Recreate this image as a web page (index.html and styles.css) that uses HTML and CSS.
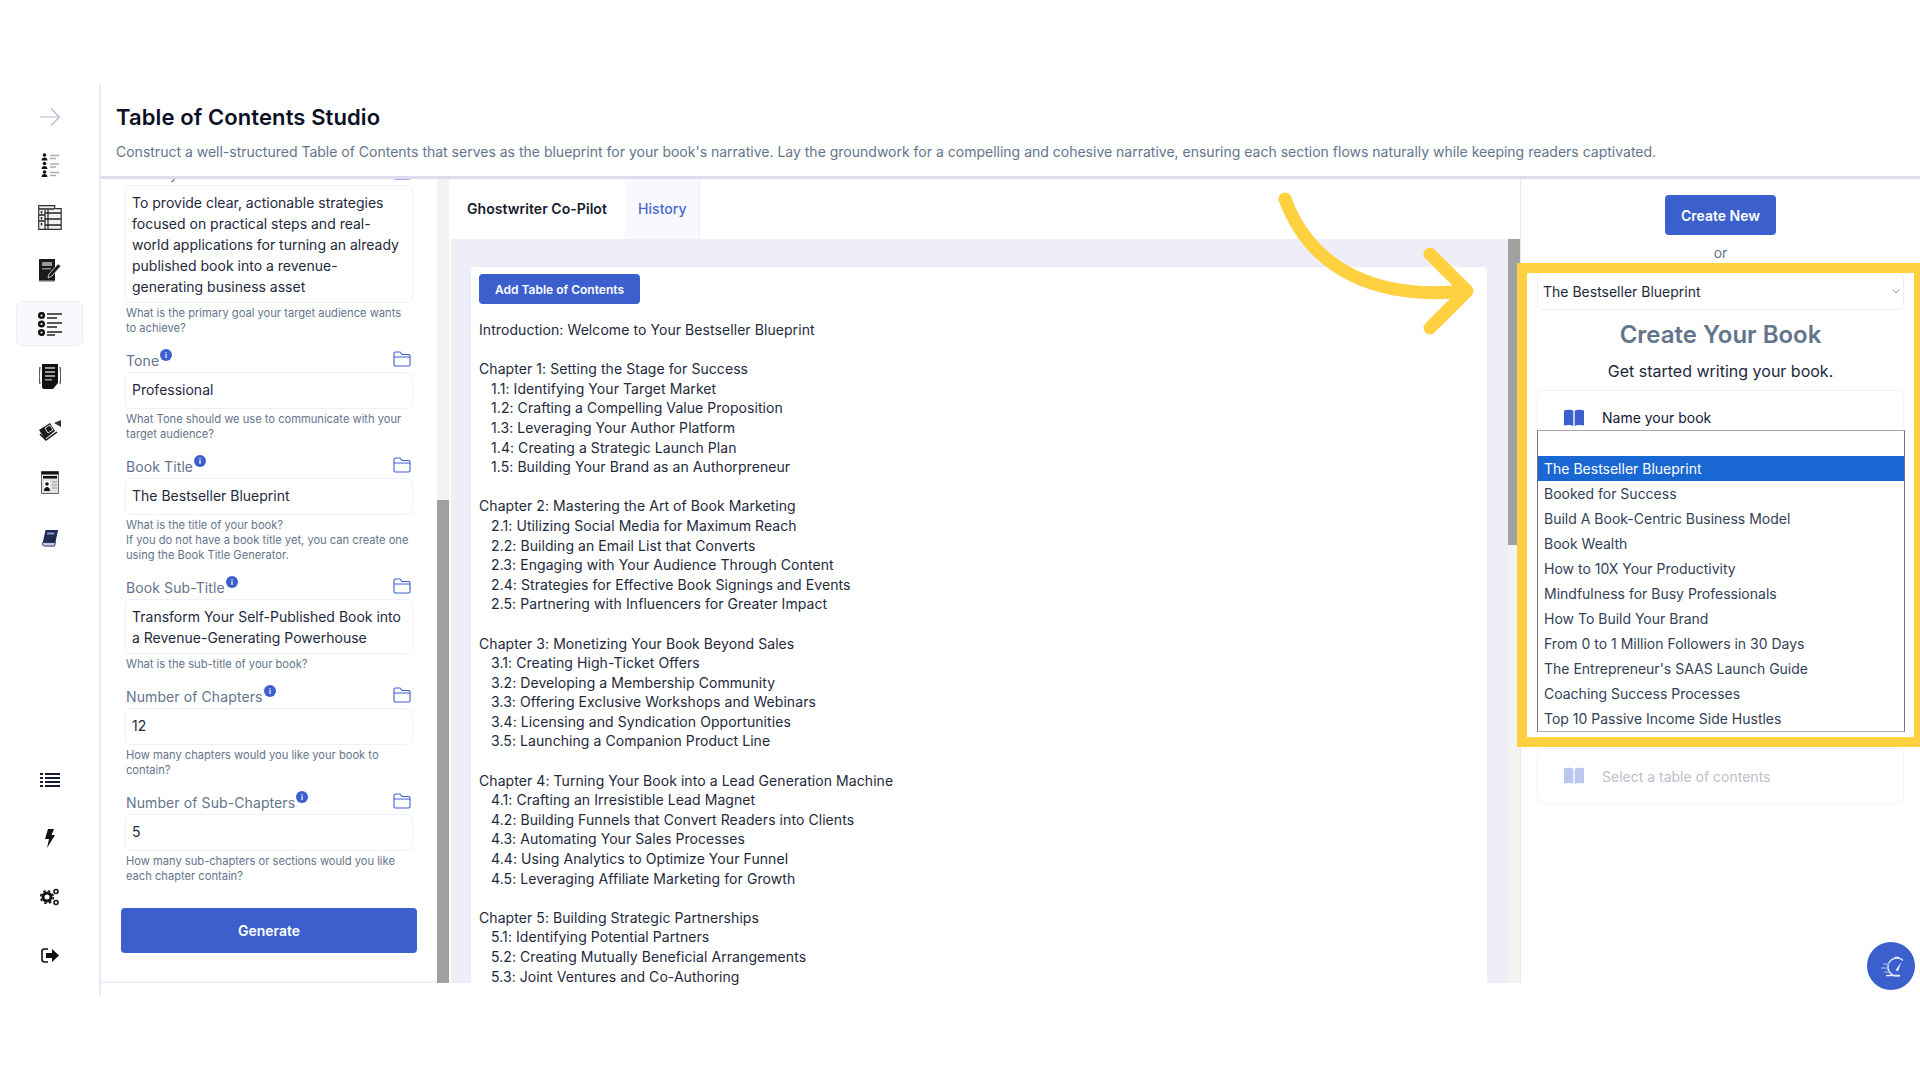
FILE: index.html
```html
<!DOCTYPE html>
<html lang="en">
<head>
    <meta charset="UTF-8">
    <title>Table of Contents Studio</title>
    <link rel="stylesheet" href="styles.css">
</head>
<body>
    <svg width="0" height="0" class="defs">
        <symbol id="folder" viewBox="0 0 18 16"><path d="M1 13.500V2.500C1 1.600 1.600 1 2.500 1H7l2 2.500h6.500c.9 0 1.500 .6 1.500 1.500v8.500c0 .9-.6 1.500-1.500 1.500h-13C1.600 15 1 14.400 1 13.500ZM1 6h16" fill="none" stroke="#3b5fcc" stroke-width="1.100"/></symbol>
        <symbol id="info" viewBox="0 0 12 12"><circle cx="6" cy="6" r="6" fill="#3b5fcc"/><rect x="5.400" y="5" width="1.200" height="4" fill="#fff"/><rect x="5.400" y="3" width="1.200" height="1.200" fill="#fff"/></symbol>
        <symbol id="open-book" viewBox="0 0 20 18"><path d="M0 1.500C3 .5 7 .5 9.300 1.800V17C7 15.700 3 15.700 0 16.500ZM20 1.500C17 .5 13 .5 10.700 1.800V17C13 15.700 17 15.700 20 16.500Z" fill="#3b5fcc"/></symbol>
    </svg>

    <div class="app">
        <nav class="sidebar">
            <div class="nav-group">
                <a class="nav-item nav-toggle"><svg width="20" height="20" viewBox="0 0 20 20"><path d="M0 10h19.500M11 1.500l8.500 8.500-8.500 8.500" fill="none" stroke="#b4b4cf" stroke-width="1.200"/></svg></a>
                <a class="nav-item"><svg width="18" height="24" viewBox="0 0 18 24"><g fill="#111"><circle cx="3.500" cy="2" r="1.800"/><path d="M.5 7.500c0-2 1.300-3 3-3s3 1 3 3Z"/><circle cx="3.500" cy="10.500" r="1.800"/><path d="M.5 16c0-2 1.300-3 3-3s3 1 3 3Z"/><circle cx="3.500" cy="19" r="1.800"/><path d="M.5 24c0-2 1.300-3 3-3s3 1 3 3Z"/></g><path d="M9 2.500h9M9 5.500h6M9 11h9M9 14h6M9 19.500h9M9 22.500h6" stroke="#aaa" stroke-width="1.400"/></svg></a>
                <a class="nav-item"><svg width="24" height="25" viewBox="0 0 24 25"><path d="M.7 .7h16v3h6.500v20.600H.7Z" fill="#f1f1f1" stroke="#333" stroke-width="1.200"/><path d="M1 4h15M7 8h16M7 14h16M7 20h16M1 10h6M1 16h6" stroke="#222" stroke-width="1.300"/><path d="M7 5v19M10 5v19" stroke="#222" stroke-width="1.200"/><path d="M3.500 6v2.500M3.500 12v2.500M3.500 18v2.500" stroke="#222" stroke-width="1.500"/></svg></a>
                <a class="nav-item"><svg width="24" height="23" viewBox="0 0 24 23"><path d="M1 0h16v21H1Z" fill="#1a1a1a"/><path d="M1 21h16v1.500H1Z" fill="#666"/><path d="M4 3h10v4H4Z" fill="#999"/><path d="M4 9h9v1.500H4Z" fill="#888"/><path d="M11 15l9-10 3 2-9 10-4 2Z" fill="#1a1a1a" stroke="#eee" stroke-width=".800"/></svg></a>
                <a class="nav-item active"><svg width="24" height="24" viewBox="0 0 24 24"><g fill="none" stroke="#111" stroke-width="2.500"><circle cx="3.500" cy="3.500" r="2.300"/><circle cx="3.500" cy="12" r="2.300"/><circle cx="3.500" cy="20.500" r="2.300"/></g><path d="M9 2h15M9 6h10M9 11h15M9 15h10M9 20h15M9 23h8" stroke="#222" stroke-width="1.500"/></svg></a>
                <a class="nav-item"><svg width="22" height="25" viewBox="0 0 22 25"><path d="M1 3C0 9 0 15 1 20M21 3c1 6 1 12 0 17" fill="none" stroke="#555" stroke-width="1.300"/><path d="M3 0h16v19l-5 6H5c-1 0-2-1-2-2Z" fill="#111"/><path d="M6 3h10v2H6ZM6 7h10v2H6ZM6 11h10v2H6ZM6 15h7v1.500H6Z" fill="#999"/></svg></a>
                <a class="nav-item"><svg width="22" height="22" viewBox="0 0 22 22"><path d="M0 11l11-7 5 8-10 8Z" fill="#1a1a1a"/><path d="M6 9l5-3 3 5-5 3Z" fill="none" stroke="#ddd" stroke-width="1"/><path d="M15 4l7-3v7Z" fill="#333"/><path d="M1 15l6 6 11-8" fill="none" stroke="#111" stroke-width="1.500"/></svg></a>
                <a class="nav-item"><svg width="18" height="23" viewBox="0 0 18 23"><path d="M.5 .5h17v22H.5Z" fill="#e2e2e2" stroke="#666" stroke-width="1"/><path d="M.5 .5h17v3H.5ZM2 5h14v2.500H2Z" fill="#111"/><path d="M3 10h6v10H3Z" fill="#fff"/><circle cx="6" cy="13" r="1.800" fill="#111"/><path d="M3 20c0-3 1.500-4 3-4s3 1 3 4Z" fill="#111"/><path d="M11 11h5M11 14h5M11 17h5" stroke="#999"/></svg></a>
                <a class="nav-item nav-last"><svg width="18" height="18" viewBox="0 0 20 20"><path d="M5 1h14l-3 14H2Z" fill="#1f2a55"/><path d="M2 15c-1 2 0 4 2 4h11l1-4Z" fill="#c7cbdc" stroke="#1f2a55"/><path d="M7 4h8l-.5 2h-8Z" fill="#8d97c4"/></svg></a>
            </div>
            <div class="nav-group nav-bottom">
                <a class="nav-item"><svg width="20" height="16" viewBox="0 0 20 16"><path d="M0 1h3v2H0ZM0 5h3v2H0ZM0 9h3v2H0ZM0 13h3v2H0ZM5 1h15v2H5ZM5 5h15v2H5ZM5 9h15v2H5ZM5 13h15v2H5Z" fill="#171b36"/></svg></a>
                <a class="nav-item"><svg width="11" height="19" viewBox="0 0 11 19"><path d="M4 0h6L7.500 6H11L3 19l2-9H1Z" fill="#111"/></svg></a>
                <a class="nav-item"><svg width="20" height="18" viewBox="0 0 20 18"><g fill="none" stroke="#111"><circle cx="7" cy="9" r="4" stroke-width="3"/><circle cx="7" cy="9" r="6.300" stroke-width="1.600" stroke-dasharray="2.500 2.500"/><circle cx="16" cy="3.500" r="2" stroke-width="1.600"/><circle cx="16" cy="14.500" r="2" stroke-width="1.600"/></g></svg></a>
                <a class="nav-item"><svg width="18" height="15" viewBox="0 0 18 15"><path d="M7 1H3.500C2 1 1 2 1 3.500v8C1 13 2 14 3.500 14H7" fill="none" stroke="#111" stroke-width="1.600"/><path d="M5 5h6V1l7 6.500L11 14v-4H5Z" fill="#111"/></svg></a>
            </div>
        </nav>

        <div class="main">
            <header class="page-header">
                <h1>Table of Contents Studio</h1>
                <p>Construct a well-structured Table of Contents that serves as the blueprint for your book's narrative. Lay the groundwork for a compelling and cohesive narrative, ensuring each section flows naturally while keeping readers captivated.</p>
            </header>

            <div class="panels">
                <section class="form-panel">
                    <div class="form-scroll">
                        <div class="field">
                            <div class="field-label"><span>Primary Goal<svg class="info"><use href="#info"/></svg></span><svg class="folder"><use href="#folder"/></svg></div>
                            <div class="field-box rows-5">To provide clear, actionable strategies focused on practical steps and real-world applications for turning an already published book into a revenue-generating business asset</div>
                            <p class="hint">What is the primary goal your target audience wants to achieve?</p>
                        </div>
                        <div class="field">
                            <div class="field-label"><span>Tone<svg class="info"><use href="#info"/></svg></span><svg class="folder"><use href="#folder"/></svg></div>
                            <div class="field-box">Professional</div>
                            <p class="hint">What Tone should we use to communicate with your target audience?</p>
                        </div>
                        <div class="field">
                            <div class="field-label"><span>Book Title<svg class="info"><use href="#info"/></svg></span><svg class="folder"><use href="#folder"/></svg></div>
                            <div class="field-box">The Bestseller Blueprint</div>
                            <p class="hint">What is the title of your book?<br>If you do not have a book title yet, you can create one using the Book Title Generator.</p>
                        </div>
                        <div class="field">
                            <div class="field-label"><span>Book Sub-Title<svg class="info"><use href="#info"/></svg></span><svg class="folder"><use href="#folder"/></svg></div>
                            <div class="field-box rows-2">Transform Your Self-Published Book into a Revenue-Generating Powerhouse</div>
                            <p class="hint">What is the sub-title of your book?</p>
                        </div>
                        <div class="field">
                            <div class="field-label"><span>Number of Chapters<svg class="info"><use href="#info"/></svg></span><svg class="folder"><use href="#folder"/></svg></div>
                            <div class="field-box">12</div>
                            <p class="hint">How many chapters would you like your book to contain?</p>
                        </div>
                        <div class="field">
                            <div class="field-label"><span>Number of Sub-Chapters<svg class="info"><use href="#info"/></svg></span><svg class="folder"><use href="#folder"/></svg></div>
                            <div class="field-box">5</div>
                            <p class="hint">How many sub-chapters or sections would you like each chapter contain?</p>
                        </div>
                        <button class="btn btn-generate">Generate</button>
                    </div>
                    <div class="scrollbar form-bar"><div class="thumb"></div></div>
                </section>

                <section class="output-panel">
                    <div class="tabs">
                        <div class="tab tab-active">Ghostwriter Co-Pilot</div>
                        <div class="tab tab-link">History</div>
                    </div>
                    <div class="output-body">
                        <div class="output-band">
                            <div class="output-card">
                                <button class="btn btn-add">Add Table of Contents</button>
<pre class="toc">Introduction: Welcome to Your Bestseller Blueprint

Chapter 1: Setting the Stage for Success
   1.1: Identifying Your Target Market
   1.2: Crafting a Compelling Value Proposition
   1.3: Leveraging Your Author Platform
   1.4: Creating a Strategic Launch Plan
   1.5: Building Your Brand as an Authorpreneur

Chapter 2: Mastering the Art of Book Marketing
   2.1: Utilizing Social Media for Maximum Reach
   2.2: Building an Email List that Converts
   2.3: Engaging with Your Audience Through Content
   2.4: Strategies for Effective Book Signings and Events
   2.5: Partnering with Influencers for Greater Impact

Chapter 3: Monetizing Your Book Beyond Sales
   3.1: Creating High-Ticket Offers
   3.2: Developing a Membership Community
   3.3: Offering Exclusive Workshops and Webinars
   3.4: Licensing and Syndication Opportunities
   3.5: Launching a Companion Product Line

Chapter 4: Turning Your Book into a Lead Generation Machine
   4.1: Crafting an Irresistible Lead Magnet
   4.2: Building Funnels that Convert Readers into Clients
   4.3: Automating Your Sales Processes
   4.4: Using Analytics to Optimize Your Funnel
   4.5: Leveraging Affiliate Marketing for Growth

Chapter 5: Building Strategic Partnerships
   5.1: Identifying Potential Partners
   5.2: Creating Mutually Beneficial Arrangements
   5.3: Joint Ventures and Co-Authoring</pre>
                            </div>
                        </div>
                        <div class="scrollbar output-bar"><div class="thumb"></div></div>
                    </div>
                </section>

                <aside class="book-panel">
                    <button class="btn btn-create">Create New</button>
                    <div class="or">or</div>
                    <div class="book-select">The Bestseller Blueprint<svg width="8" height="5" viewBox="0 0 8 5"><path d="M.5 .5 4 4 7.500 .5" fill="none" stroke="#999"/></svg></div>
                    <h2>Create Your Book</h2>
                    <p class="book-lead">Get started writing your book.</p>
                    <div class="step-card">
                        <div class="step-head"><svg class="step-icon"><use href="#open-book"/></svg>Name your book</div>
                        <ul class="book-list">
                            <li class="blank"></li>
                            <li class="selected">The Bestseller Blueprint</li>
                            <li>Booked for Success</li>
                            <li>Build A Book-Centric Business Model</li>
                            <li>Book Wealth</li>
                            <li>How to 10X Your Productivity</li>
                            <li>Mindfulness for Busy Professionals</li>
                            <li>How To Build Your Brand</li>
                            <li>From 0 to 1 Million Followers in 30 Days</li>
                            <li>The Entrepreneur's SAAS Launch Guide</li>
                            <li>Coaching Success Processes</li>
                            <li>Top 10 Passive Income Side Hustles</li>
                        </ul>
                    </div>
                    <div class="step-card step-disabled">
                        <div class="step-head"><svg class="step-icon"><use href="#open-book"/></svg>Select a table of contents</div>
                    </div>
                </aside>
            </div>
        </div>
    </div>

    <!-- annotation drawn over the screenshot -->
    <svg class="callout-arrow" width="1920" height="1080" viewBox="0 0 1920 1080">
        <path d="M1285 199C1312 272 1380 300 1465 291M1430 254l37 37-37 37" fill="none" stroke="#ffd03f" stroke-width="13" stroke-linecap="round" stroke-linejoin="round"/>
    </svg>
    <div class="callout-frame"></div>

    <button class="speed-btn"><svg width="30" height="30" viewBox="0 0 30 30"><path d="M27 9.500A9 9 0 1 0 24 24.500H10" fill="none" stroke="#e3e8fb" stroke-width="1.500"/><path d="M19 6.500h4M21 6.500v1.500" stroke="#e3e8fb" stroke-width="1.500"/><path d="M19.500 19l6-8-3.500 9.500Z" fill="#e3e8fb"/><path d="M7 13h6M5 17h7M8 21h5" stroke="#8fa4e6" stroke-width="1.300"/></svg></button>
</body>
</html>
```

FILE: styles.css
```css
* {
    box-sizing: border-box;
}
html, body {
    margin: 0;
    height: 100%;
    overflow: hidden;
}
body {
    position: relative;
    background: #fff;
    color: #1e293b;
    font-family: Inter, "Liberation Sans", sans-serif;
    font-size: 14px;
}
.defs {
    position: absolute;
}
.app {
    display: flex;
    height: 910px;
    margin-top: 85px;
}

.sidebar {
    display: flex;
    flex-direction: column;
    flex: 0 0 101px;
    padding: 15px 16px 17px 16px;
    border-right: 2px solid #e8e8f8;
}
.nav-group {
    display: flex;
    flex-direction: column;
    gap: 8px;
}
.nav-bottom {
    gap: 13.500px;
    margin-top: auto;
}
.nav-item {
    display: flex;
    align-items: center;
    justify-content: center;
    height: 45px;
    border: 1px solid transparent;
    border-radius: 6px;
}
.nav-toggle {
    height: 34px;
}
.nav-last {
    padding-top: 4px;
}
.nav-item.active {
    background: #f8f8fd;
    border-color: #eeeef9;
}

.main {
    flex: 1;
    min-width: 0;
}
.page-header {
    height: 94px;
    padding: 18px 0 0 15px;
    border-bottom: 3px solid #dcdcec;
}
.page-header h1 {
    margin: 0;
    color: #0b1026;
    font-size: 22px;
    font-weight: 600;
    letter-spacing: 0.1px;
    line-height: 28px;
}
.page-header p {
    margin: 11px 0 0;
    color: #64748b;
    font-size: 14px;
    line-height: 20px;
    white-space: nowrap;
}

.panels {
    display: flex;
    height: 804px;
}

.form-panel {
    display: flex;
    flex: 0 0 350px;
    min-height: 0;
}
.form-scroll {
    display: flex;
    flex-direction: column;
    justify-content: flex-end;
    width: 336px;
    padding: 0 24px 28px;
    border-bottom: 2px solid #f0f0f9;
    overflow: hidden;
}
.field {
    flex: none;
    margin-bottom: 12px;
}
.field-label {
    display: flex;
    align-items: center;
    justify-content: space-between;
    height: 24px;
    padding: 0 2px 2px 1px;
    color: #64748b;
    font-size: 14px;
    letter-spacing: 0.1px;
}
.info {
    width: 12px;
    height: 12px;
    margin-left: 1px;
    vertical-align: 5px;
}
.folder {
    width: 18px;
    height: 16px;
}
.field-box {
    min-height: 37px;
    padding: 6px 6px 5px;
    border: 1.500px solid #f0f0fa;
    border-radius: 6px;
    line-height: 21px;
}
.rows-2 {
    min-height: 55px;
}
.rows-5 {
    min-height: 118px;
}
.hint {
    margin: 3px 0 0;
    padding-left: 1px;
    color: #64748b;
    font-size: 11.150px;
    line-height: 15px;
}
.btn {
    border: none;
    border-radius: 4px;
    background: #3b5fcc;
    color: #fff;
    font-family: inherit;
    font-weight: 600;
}
.btn-generate {
    flex: none;
    height: 45px;
    margin: 12px -4px 0;
    font-size: 14px;
}

.scrollbar {
    flex: none;
    width: 12px;
    background: #f3f3f3;
}
.scrollbar .thumb {
    background: #a0a0a0;
}
.form-bar {
    margin-right: 2px;
}
.form-bar .thumb {
    height: 483px;
    margin-top: 321px;
}
.output-bar .thumb {
    height: 306px;
}

.output-panel {
    display: flex;
    flex-direction: column;
    flex: 0 0 1069px;
    min-height: 0;
}
.tabs {
    display: flex;
    flex: 0 0 60px;
}
.tab {
    display: flex;
    align-items: center;
    padding: 0 13px 2px 16px;
    font-weight: 600;
    letter-spacing: 0.05px;
}
.tab-active {
    width: 174px;
    color: #161a2c;
}
.tab-link {
    width: 75px;
    padding: 0 0 2px 13px;
    background: #f8f8fd;
    border-right: 1px solid #eeeef9;
    color: #4a68cf;
    font-weight: 500;
}
.output-body {
    display: flex;
    flex: 1;
    min-height: 0;
}
.output-band {
    flex: 1;
    padding: 28px 21px 0 20px;
    background: #eeeef9;
}
.output-card {
    height: 100%;
    padding: 7px 8px 0;
    background: #fff;
    border-radius: 4px 4px 0 0;
}
.btn-add {
    display: block;
    width: 161px;
    height: 30px;
    font-size: 12px;
}
.toc {
    margin: 16px 0 0;
    color: #1e293b;
    font-family: inherit;
    font-size: 14px;
    letter-spacing: 0.07px;
    line-height: 19.600px;
}

.book-panel {
    flex: 1;
    min-width: 0;
    padding: 16px 16px 0 16px;
    border-left: 1px solid #e6e6f7;
    text-align: center;
}
.btn-create {
    width: 111px;
    height: 40px;
    font-size: 14px;
}
.or {
    margin-top: 8px;
    color: #64748b;
    line-height: 20px;
}
.book-select {
    display: flex;
    align-items: center;
    justify-content: space-between;
    height: 38px;
    margin-top: 9px;
    padding: 0 3px 0 5px;
    border: 1.500px solid #eeeef9;
    border-radius: 6px;
}
.book-panel h2 {
    margin: 9px 0 0;
    color: #64748b;
    font-size: 24px;
    font-weight: 600;
    line-height: 32px;
}
.book-lead {
    margin: 10px 0 0;
    font-size: 16px;
    line-height: 20px;
}
.step-card {
    margin-top: 9px;
    border: 1.500px solid #f3f3fb;
    border-radius: 6px;
    text-align: left;
}
.step-head {
    display: flex;
    align-items: center;
    height: 39px;
    padding: 14px 0 0 26px;
    color: #111633;
}
.step-icon {
    width: 20px;
    height: 18px;
    margin-right: 18px;
}
.book-list {
    height: 302px;
    margin: 0 -1.500px -1.500px;
    padding: 0;
    background: #fff;
    border: 1px solid #777;
    border-top-color: #aaa;
    border-bottom-color: #aaa;
    list-style: none;
}
.book-list li {
    height: 25px;
    padding-left: 6.500px;
    color: #334155;
    line-height: 25px;
}
.book-list .blank {
    height: 24.500px;
}
.book-list .selected {
    background: #1967d2;
    color: #fff;
}
.step-disabled {
    height: 56px;
    margin-top: 16px;
}
.step-disabled .step-head {
    height: 54px;
    padding-top: 1px;
    color: #bcc0cb;
}
.step-disabled .step-icon {
    opacity: 0.35;
}

.callout-arrow {
    position: absolute;
    top: 0;
    left: 0;
    pointer-events: none;
}
.callout-frame {
    position: absolute;
    top: 263px;
    left: 1517px;
    right: 0;
    height: 484px;
    border: 10px solid #ffd03f;
    border-right-width: 6px;
    pointer-events: none;
}
.speed-btn {
    display: flex;
    align-items: center;
    justify-content: center;
    position: absolute;
    top: 942px;
    left: 1867px;
    width: 48px;
    height: 48px;
    padding: 0;
    background: #3b5fcc;
    border: none;
    border-radius: 50%;
}
```
